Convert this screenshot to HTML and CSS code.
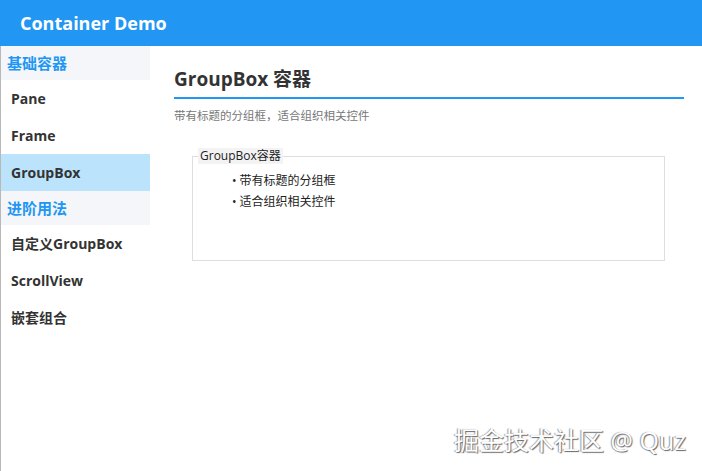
FILE: index.html
```html
<!DOCTYPE html>
<html lang="zh">
<head>
    <meta charset="UTF-8">
    <meta name="viewport" content="width=device-width, initial-scale=1.0">
    <title>Container Demo</title>
    <link rel="stylesheet" href="styles.css">
</head>
<body>

    <!-- Header -->
    <header class="topbar">
        <h1>Container Demo</h1>
    </header>

    <div class="layout">
        <!-- Sidebar -->
        <nav class="sidebar">
            <div class="nav-group">基础容器</div>
            <div class="nav-item">Pane</div>
            <div class="nav-item">Frame</div>
            <div class="nav-item active">GroupBox</div>
            <div class="nav-group">进阶用法</div>
            <div class="nav-item">自定义GroupBox</div>
            <div class="nav-item">ScrollView</div>
            <div class="nav-item">嵌套组合</div>
        </nav>

        <!-- Content -->
        <main class="content">
            <h2 class="page-title">GroupBox 容器</h2>
            <p class="page-desc">带有标题的分组框，适合组织相关控件</p>

            <fieldset class="groupbox">
                <legend>GroupBox容器</legend>
                <ul>
                    <li>带有标题的分组框</li>
                    <li>适合组织相关控件</li>
                </ul>
            </fieldset>
        </main>
    </div>

    <div class="watermark">掘金技术社区 @ Quz</div>

</body>
</html>
```

FILE: styles.css
```css
body {
    margin: 0;
    padding: 0;
    font-family: "Open Sans", "Noto Sans CJK SC", sans-serif;
    background-color: #fff;
    color: #333;
    height: 471px;
    overflow: hidden;
}

/* Header */
.topbar {
    height: 46px;
    background-color: #2196f3;
    display: flex;
    align-items: center;
    padding: 0 20px;
}

.topbar h1 {
    margin: 0;
    font-size: 18px;
    font-weight: 700;
    color: #fff;
}

.layout {
    display: flex;
    height: 425px;
}

/* Sidebar */
.sidebar {
    width: 149px;
    border-left: 1px solid #b8b8b8;
    display: flex;
    flex-direction: column;
}

.nav-group {
    height: 34px;
    line-height: 34px;
    padding-left: 6px;
    background-color: #f4f6f9;
    color: #2196f3;
    font-size: 15px;
    font-weight: 700;
}

.nav-item {
    height: 37px;
    line-height: 37px;
    padding-left: 10px;
    font-size: 14px;
    font-weight: 700;
    color: #333;
}

.nav-item.active {
    background-color: #bbe3fb;
}

/* Content */
.content {
    flex: 1;
    padding: 19px 18px 0 24px;
}

.page-title {
    margin: 0;
    padding-bottom: 4px;
    font-size: 19px;
    line-height: 28px;
    font-weight: 700;
    color: #333;
    border-bottom: 2px solid #2196f3;
}

.page-desc {
    margin: 8px 0 0;
    font-size: 11.5px;
    line-height: 18px;
    color: #777;
}

.groupbox {
    margin: 23px 19px 0 18px;
    padding: 0 5px 48px;
    border: 1px solid #dedede;
}

.groupbox legend {
    padding: 0 2px;
    font-size: 12px;
    line-height: 16px;
    color: #222;
    background-color: #f3f3f3;
}

.groupbox ul {
    margin: 6px 0 0;
    padding-left: 34px;
    list-style: none;
}

.groupbox li {
    font-size: 12px;
    line-height: 21px;
    color: #222;
}

.groupbox li::before {
    content: "\2022";
    margin-right: 3px;
}

/* Watermark */
.watermark {
    position: absolute;
    right: 16px;
    bottom: 14px;
    font-size: 25px;
    color: #fff;
    text-shadow: 1px 1px 1px #666, -1px 0 1px #999;
}
```
